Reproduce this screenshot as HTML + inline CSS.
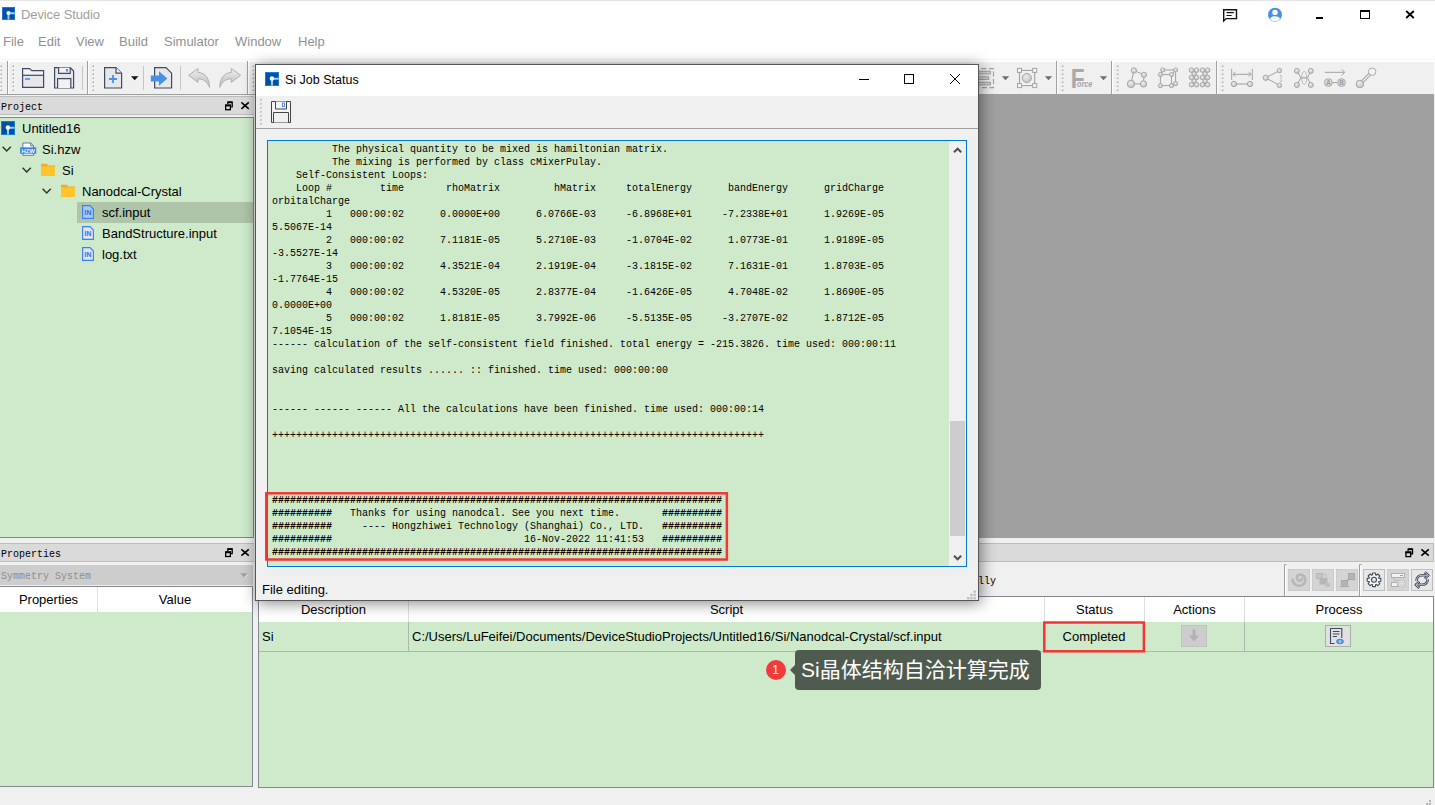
<!DOCTYPE html>
<html><head><meta charset="utf-8"><title>Device Studio</title>
<style>
*{box-sizing:border-box;margin:0;padding:0}
html,body{width:1435px;height:805px;overflow:hidden;background:#fff}
body{position:relative;font-family:"Liberation Sans","Noto Sans CJK SC",sans-serif;font-size:13px;color:#000}
.a{position:absolute}
.t{position:absolute;white-space:pre;line-height:16px;height:16px}
.mono{font-family:"Liberation Mono","Noto Sans CJK SC",monospace}
.sim{position:absolute;white-space:pre;font-family:"Liberation Mono",monospace;font-size:11px;line-height:13px;transform:scaleX(.90909);transform-origin:0 0}
.g{background:#ceeacb}
svg{position:absolute;overflow:visible}
</style></head><body>
<!-- ===== main window chrome ===== -->
<div class="a" style="left:0;top:59px;width:1435px;height:1px;background:#f6f6f6"></div>
<div class="a" id="tb" style="left:0;top:62px;width:1434px;height:33px;background:#f0f0f0"></div>
<div class="a" style="left:0;top:94px;width:1434px;height:1px;background:#a0a0a0"></div>
<div class="a" style="left:0;top:95px;width:1435px;height:710px;background:#f0f0f0"></div>
<div class="t" style="left:21px;top:7px;color:#a0a0a0;letter-spacing:-.1px">Device Studio</div>
<div class="t" style="left:3px;top:34px;color:#919191">File</div>
<div class="t" style="left:38px;top:34px;color:#919191">Edit</div>
<div class="t" style="left:76px;top:34px;color:#919191">View</div>
<div class="t" style="left:119px;top:34px;color:#919191">Build</div>
<div class="t" style="left:164px;top:34px;color:#919191">Simulator</div>
<div class="t" style="left:235px;top:34px;color:#919191">Window</div>
<div class="t" style="left:298px;top:34px;color:#919191">Help</div>
<!-- window controls -->
<div class="a" style="left:0;top:0;width:1435px;height:1px;background:#e4e4e4"></div>
<svg style="left:1222px;top:8px" width="17" height="15" viewBox="0 0 17 15"><path d="M1.7 1.7H14.5V10.6H4.2L1.7 12.9Z" fill="none" stroke="#111" stroke-width="1.4" stroke-linejoin="miter"/><path d="M4.5 4.7H11.8M4.5 7.5H9.6" stroke="#111" stroke-width="1.2"/></svg>
<svg style="left:1267px;top:7px" width="16" height="16" viewBox="0 0 16 16"><circle cx="8" cy="7.8" r="7" fill="#4a90e2"/><circle cx="8" cy="5.4" r="2.7" fill="#fff"/><path d="M2.9 11.9C4 9.9 6 9.3 8 9.3S12 9.9 13.1 11.9C11.9 13.5 10 14.3 8 14.3S4.1 13.5 2.9 11.9Z" fill="#fff"/></svg>
<div class="a" style="left:1316px;top:17px;width:7px;height:2px;background:#000"></div>
<div class="a" style="left:1360px;top:10px;width:10px;height:9px;border:1px solid #000;border-top-width:2px"></div>
<svg style="left:1405px;top:10px" width="10" height="9" viewBox="0 0 10 9"><path d="M1.2 1L8.8 8M8.8 1L1.2 8" stroke="#000" stroke-width="1.8"/></svg>
<!-- logo -->
<svg style="left:2px;top:7px" width="13" height="13" viewBox="0 0 14 14"><rect width="14" height="14" fill="#0050a8"/><rect x=".5" y=".5" width="13" height="13" fill="none" stroke="#1f7ad6" stroke-width="1"/><path d="M7 13.5V6.7H13.5" fill="none" stroke="#9ccdf5" stroke-width="2.1"/><circle cx="6.9" cy="6.5" r="2.2" fill="#fff"/></svg>
<!-- MDI gray area -->
<div class="a" style="left:258px;top:95px;width:1176px;height:443px;background:#a0a0a0"></div>
<svg id="mainicons" style="left:0;top:0" width="1435" height="805" viewBox="0 0 1435 805"><path d="M1.8 65.0V67.0H-0.2Z" fill="#a6a6a6"/><path d="M-0.2 67.0L1.8 65.0" stroke="#cfcfcf" stroke-width=".7"/><path d="M1.8 69.0V71.0H-0.2Z" fill="#a6a6a6"/><path d="M-0.2 71.0L1.8 69.0" stroke="#cfcfcf" stroke-width=".7"/><path d="M1.8 73.0V75.0H-0.2Z" fill="#a6a6a6"/><path d="M-0.2 75.0L1.8 73.0" stroke="#cfcfcf" stroke-width=".7"/><path d="M1.8 77.0V79.0H-0.2Z" fill="#a6a6a6"/><path d="M-0.2 79.0L1.8 77.0" stroke="#cfcfcf" stroke-width=".7"/><path d="M1.8 81.0V83.0H-0.2Z" fill="#a6a6a6"/><path d="M-0.2 83.0L1.8 81.0" stroke="#cfcfcf" stroke-width=".7"/><path d="M1.8 85.0V87.0H-0.2Z" fill="#a6a6a6"/><path d="M-0.2 87.0L1.8 85.0" stroke="#cfcfcf" stroke-width=".7"/><path d="M1.8 89.0V91.0H-0.2Z" fill="#a6a6a6"/><path d="M-0.2 91.0L1.8 89.0" stroke="#cfcfcf" stroke-width=".7"/><path d="M14.0 65.0V67.0H12.0Z" fill="#a6a6a6"/><path d="M12.0 67.0L14.0 65.0" stroke="#cfcfcf" stroke-width=".7"/><path d="M14.0 69.0V71.0H12.0Z" fill="#a6a6a6"/><path d="M12.0 71.0L14.0 69.0" stroke="#cfcfcf" stroke-width=".7"/><path d="M14.0 73.0V75.0H12.0Z" fill="#a6a6a6"/><path d="M12.0 75.0L14.0 73.0" stroke="#cfcfcf" stroke-width=".7"/><path d="M14.0 77.0V79.0H12.0Z" fill="#a6a6a6"/><path d="M12.0 79.0L14.0 77.0" stroke="#cfcfcf" stroke-width=".7"/><path d="M14.0 81.0V83.0H12.0Z" fill="#a6a6a6"/><path d="M12.0 83.0L14.0 81.0" stroke="#cfcfcf" stroke-width=".7"/><path d="M14.0 85.0V87.0H12.0Z" fill="#a6a6a6"/><path d="M12.0 87.0L14.0 85.0" stroke="#cfcfcf" stroke-width=".7"/><path d="M14.0 89.0V91.0H12.0Z" fill="#a6a6a6"/><path d="M12.0 91.0L14.0 89.0" stroke="#cfcfcf" stroke-width=".7"/><path d="M94.0 65.0V67.0H92.0Z" fill="#a6a6a6"/><path d="M92.0 67.0L94.0 65.0" stroke="#cfcfcf" stroke-width=".7"/><path d="M94.0 69.0V71.0H92.0Z" fill="#a6a6a6"/><path d="M92.0 71.0L94.0 69.0" stroke="#cfcfcf" stroke-width=".7"/><path d="M94.0 73.0V75.0H92.0Z" fill="#a6a6a6"/><path d="M92.0 75.0L94.0 73.0" stroke="#cfcfcf" stroke-width=".7"/><path d="M94.0 77.0V79.0H92.0Z" fill="#a6a6a6"/><path d="M92.0 79.0L94.0 77.0" stroke="#cfcfcf" stroke-width=".7"/><path d="M94.0 81.0V83.0H92.0Z" fill="#a6a6a6"/><path d="M92.0 83.0L94.0 81.0" stroke="#cfcfcf" stroke-width=".7"/><path d="M94.0 85.0V87.0H92.0Z" fill="#a6a6a6"/><path d="M92.0 87.0L94.0 85.0" stroke="#cfcfcf" stroke-width=".7"/><path d="M94.0 89.0V91.0H92.0Z" fill="#a6a6a6"/><path d="M92.0 91.0L94.0 89.0" stroke="#cfcfcf" stroke-width=".7"/><path d="M254.0 65.0V67.0H252.0Z" fill="#a6a6a6"/><path d="M252.0 67.0L254.0 65.0" stroke="#cfcfcf" stroke-width=".7"/><path d="M254.0 69.0V71.0H252.0Z" fill="#a6a6a6"/><path d="M252.0 71.0L254.0 69.0" stroke="#cfcfcf" stroke-width=".7"/><path d="M254.0 73.0V75.0H252.0Z" fill="#a6a6a6"/><path d="M252.0 75.0L254.0 73.0" stroke="#cfcfcf" stroke-width=".7"/><path d="M254.0 77.0V79.0H252.0Z" fill="#a6a6a6"/><path d="M252.0 79.0L254.0 77.0" stroke="#cfcfcf" stroke-width=".7"/><path d="M254.0 81.0V83.0H252.0Z" fill="#a6a6a6"/><path d="M252.0 83.0L254.0 81.0" stroke="#cfcfcf" stroke-width=".7"/><path d="M254.0 85.0V87.0H252.0Z" fill="#a6a6a6"/><path d="M252.0 87.0L254.0 85.0" stroke="#cfcfcf" stroke-width=".7"/><path d="M254.0 89.0V91.0H252.0Z" fill="#a6a6a6"/><path d="M252.0 91.0L254.0 89.0" stroke="#cfcfcf" stroke-width=".7"/><path d="M1063.3 65.0V67.0H1061.3Z" fill="#a6a6a6"/><path d="M1061.3 67.0L1063.3 65.0" stroke="#cfcfcf" stroke-width=".7"/><path d="M1063.3 69.0V71.0H1061.3Z" fill="#a6a6a6"/><path d="M1061.3 71.0L1063.3 69.0" stroke="#cfcfcf" stroke-width=".7"/><path d="M1063.3 73.0V75.0H1061.3Z" fill="#a6a6a6"/><path d="M1061.3 75.0L1063.3 73.0" stroke="#cfcfcf" stroke-width=".7"/><path d="M1063.3 77.0V79.0H1061.3Z" fill="#a6a6a6"/><path d="M1061.3 79.0L1063.3 77.0" stroke="#cfcfcf" stroke-width=".7"/><path d="M1063.3 81.0V83.0H1061.3Z" fill="#a6a6a6"/><path d="M1061.3 83.0L1063.3 81.0" stroke="#cfcfcf" stroke-width=".7"/><path d="M1063.3 85.0V87.0H1061.3Z" fill="#a6a6a6"/><path d="M1061.3 87.0L1063.3 85.0" stroke="#cfcfcf" stroke-width=".7"/><path d="M1063.3 89.0V91.0H1061.3Z" fill="#a6a6a6"/><path d="M1061.3 91.0L1063.3 89.0" stroke="#cfcfcf" stroke-width=".7"/><path d="M1118.3 65.0V67.0H1116.3Z" fill="#a6a6a6"/><path d="M1116.3 67.0L1118.3 65.0" stroke="#cfcfcf" stroke-width=".7"/><path d="M1118.3 69.0V71.0H1116.3Z" fill="#a6a6a6"/><path d="M1116.3 71.0L1118.3 69.0" stroke="#cfcfcf" stroke-width=".7"/><path d="M1118.3 73.0V75.0H1116.3Z" fill="#a6a6a6"/><path d="M1116.3 75.0L1118.3 73.0" stroke="#cfcfcf" stroke-width=".7"/><path d="M1118.3 77.0V79.0H1116.3Z" fill="#a6a6a6"/><path d="M1116.3 79.0L1118.3 77.0" stroke="#cfcfcf" stroke-width=".7"/><path d="M1118.3 81.0V83.0H1116.3Z" fill="#a6a6a6"/><path d="M1116.3 83.0L1118.3 81.0" stroke="#cfcfcf" stroke-width=".7"/><path d="M1118.3 85.0V87.0H1116.3Z" fill="#a6a6a6"/><path d="M1116.3 87.0L1118.3 85.0" stroke="#cfcfcf" stroke-width=".7"/><path d="M1118.3 89.0V91.0H1116.3Z" fill="#a6a6a6"/><path d="M1116.3 91.0L1118.3 89.0" stroke="#cfcfcf" stroke-width=".7"/><path d="M1223.3 65.0V67.0H1221.3Z" fill="#a6a6a6"/><path d="M1221.3 67.0L1223.3 65.0" stroke="#cfcfcf" stroke-width=".7"/><path d="M1223.3 69.0V71.0H1221.3Z" fill="#a6a6a6"/><path d="M1221.3 71.0L1223.3 69.0" stroke="#cfcfcf" stroke-width=".7"/><path d="M1223.3 73.0V75.0H1221.3Z" fill="#a6a6a6"/><path d="M1221.3 75.0L1223.3 73.0" stroke="#cfcfcf" stroke-width=".7"/><path d="M1223.3 77.0V79.0H1221.3Z" fill="#a6a6a6"/><path d="M1221.3 79.0L1223.3 77.0" stroke="#cfcfcf" stroke-width=".7"/><path d="M1223.3 81.0V83.0H1221.3Z" fill="#a6a6a6"/><path d="M1221.3 83.0L1223.3 81.0" stroke="#cfcfcf" stroke-width=".7"/><path d="M1223.3 85.0V87.0H1221.3Z" fill="#a6a6a6"/><path d="M1221.3 87.0L1223.3 85.0" stroke="#cfcfcf" stroke-width=".7"/><path d="M1223.3 89.0V91.0H1221.3Z" fill="#a6a6a6"/><path d="M1221.3 91.0L1223.3 89.0" stroke="#cfcfcf" stroke-width=".7"/><defs><radialGradient id="rg" cx=".4" cy=".35" r=".75"><stop offset="0" stop-color="#ececec"/><stop offset="1" stop-color="#bdbdbd"/></radialGradient><linearGradient id="lg" x1="0" y1="0" x2="0" y2="1"><stop offset="0" stop-color="#ededed"/><stop offset="1" stop-color="#bcbcbc"/></linearGradient></defs><path d="M7.5 61V94" stroke="#a0a0a0" stroke-width="1"/><path d="M8.5 61V94" stroke="#fff" stroke-width="1"/><path d="M87.5 61V94" stroke="#a0a0a0" stroke-width="1"/><path d="M88.5 61V94" stroke="#fff" stroke-width="1"/><path d="M247.5 61V94" stroke="#a0a0a0" stroke-width="1"/><path d="M248.5 61V94" stroke="#fff" stroke-width="1"/><path d="M82.5 66V90" stroke="#c5c5c5" stroke-width="1"/><path d="M143.5 66V90" stroke="#c5c5c5" stroke-width="1"/><path d="M180.5 66V90" stroke="#c5c5c5" stroke-width="1"/><path d="M22.6 68.6H29.6L31.8 70.7H43.6V87.4H22.6Z" fill="#f3f3f5"/><path d="M22.6 75.3H43.6V87.4H22.6Z" fill="#e6e7eb"/><path d="M22.6 68.6H29.6L31.8 70.7H43.6V87.4H22.6Z" fill="none" stroke="#3f4a5e" stroke-width="1.2" stroke-linejoin="miter"/><path d="M22.6 75.3H43.6" stroke="#3f4a5e" stroke-width="1.2"/><path d="M25 79H30" stroke="#4a90e2" stroke-width="1.6"/><path d="M54.6 67.6H70.2L73.6 71V88H54.6Z" fill="#e6e7eb" stroke="#3f4a5e" stroke-width="1.2"/><path d="M58.6 67.6V73.3H70.2V67.6" fill="#f2f2f4" stroke="#3f4a5e" stroke-width="1.2"/><rect x="66" y="69" width="2" height="2.6" fill="#4a90e2"/><path d="M57.6 88V78.6H70.8V88" fill="#f2f2f4" stroke="#3f4a5e" stroke-width="1.2"/><path d="M104.6 67.6H116L121.6 73.2V88H104.6Z" fill="#e6e7eb" stroke="#3f4a5e" stroke-width="1.2"/><path d="M116 67.6V73.2H121.6" fill="#f4f4f6" stroke="#3f4a5e" stroke-width="1.2"/><path d="M109 79H117M113 75V83" stroke="#4a90e2" stroke-width="1.8"/><path d="M131 76.2H138.4L134.7 80.3Z" fill="#111"/><path d="M154.6 67.6H166L171.6 73.2V88H154.6Z" fill="#e6e7eb" stroke="#3f4a5e" stroke-width="1.2"/><path d="M150.8 75.4H159V71.2L167.4 78.5L159 85.8V81.6H150.8Z" fill="#4a90e2"/><path d="M188.6 75.3L198 68.4V72.4C205.5 72.8 209.6 79 209.5 87.4C207.4 81.6 203.4 79 198 78.8V82.4Z" fill="url(#lg)" stroke="#b0b0b0" stroke-width="1"/><g transform="translate(429.3 0) scale(-1 1)"><path d="M188.6 75.3L198 68.4V72.4C205.5 72.8 209.6 79 209.5 87.4C207.4 81.6 203.4 79 198 78.8V82.4Z" fill="url(#lg)" stroke="#b0b0b0" stroke-width="1"/></g><rect x="966.5" y="68.6" width="27" height="19" fill="none" stroke="#a2a2a2" stroke-width="1.1" stroke-dasharray="5 2.5"/><rect x="970" y="71.3" width="20.4" height="2.6" fill="#d4d4d4" stroke="#a2a2a2" stroke-width="1"/><rect x="970" y="76.8" width="18.7" height="2.6" fill="#d4d4d4" stroke="#a2a2a2" stroke-width="1"/><rect x="970" y="82.3" width="20.4" height="2.6" fill="#d4d4d4" stroke="#a2a2a2" stroke-width="1"/><path d="M1001.8 76.2H1009.2L1005.5 80.3Z" fill="#6f6f6f"/><rect x="1019.5" y="70.4" width="15.2" height="15.2" fill="none" stroke="#a2a2a2" stroke-width="1.1"/><circle cx="1026.8" cy="78" r="4.6" fill="url(#rg)" stroke="#a2a2a2" stroke-width=".9"/><rect x="1017.5" y="68.4" width="4" height="4" fill="#f6f6f6" stroke="#a2a2a2" stroke-width="1"/><rect x="1032.7" y="68.4" width="4" height="4" fill="#f6f6f6" stroke="#a2a2a2" stroke-width="1"/><rect x="1017.5" y="83.6" width="4" height="4" fill="#f6f6f6" stroke="#a2a2a2" stroke-width="1"/><rect x="1032.7" y="83.6" width="4" height="4" fill="#f6f6f6" stroke="#a2a2a2" stroke-width="1"/><path d="M1044.8 76.2H1052.2L1048.5 80.3Z" fill="#6f6f6f"/><path d="M1056.5 61V94" stroke="#a0a0a0" stroke-width="1"/><path d="M1057.5 61V94" stroke="#fff" stroke-width="1"/><text x="1070.7" y="87.8" font-family="Liberation Sans,sans-serif" font-weight="bold" font-size="28.2" fill="#a9a9a9" textLength="13.8" lengthAdjust="spacingAndGlyphs">F</text><text x="1077" y="86.9" font-family="Liberation Sans,sans-serif" font-style="italic" font-weight="bold" font-size="9" fill="#a4a4a4" textLength="15.2" lengthAdjust="spacingAndGlyphs">orce</text><path d="M1099.8 76.2H1107.2L1103.5 80.3Z" fill="#6f6f6f"/><path d="M1111.5 61V94" stroke="#a0a0a0" stroke-width="1"/><path d="M1112.5 61V94" stroke="#fff" stroke-width="1"/><path d="M1133.9 70.5L1144 74.8L1143.5 83.9L1131 83.9Z" fill="none" stroke="#a2a2a2" stroke-width="1"/><circle cx="1133.9" cy="70.5" r="2.7" fill="url(#rg)" stroke="#a2a2a2" stroke-width=".9"/><circle cx="1144" cy="74.8" r="2.6" fill="url(#rg)" stroke="#a2a2a2" stroke-width=".9"/><circle cx="1131" cy="83.9" r="3.7" fill="url(#rg)" stroke="#a2a2a2" stroke-width=".9"/><circle cx="1143.5" cy="83.9" r="3.2" fill="url(#rg)" stroke="#a2a2a2" stroke-width=".9"/><path d="M1160.4 74.6H1171.5V85.6H1160.4ZM1162.7 70H1175.6V83.6M1160.4 74.6L1162.7 70M1171.5 74.6L1175.6 70M1171.5 85.6L1175.6 83.6" fill="none" stroke="#a2a2a2" stroke-width="1"/><circle cx="1160.4" cy="74.6" r="2.1" fill="url(#rg)" stroke="#a2a2a2" stroke-width=".9"/><circle cx="1171.5" cy="74.6" r="2.1" fill="url(#rg)" stroke="#a2a2a2" stroke-width=".9"/><circle cx="1160.4" cy="85.6" r="2.1" fill="url(#rg)" stroke="#a2a2a2" stroke-width=".9"/><circle cx="1171.5" cy="85.6" r="2.1" fill="url(#rg)" stroke="#a2a2a2" stroke-width=".9"/><circle cx="1162.7" cy="70" r="2.1" fill="url(#rg)" stroke="#a2a2a2" stroke-width=".9"/><circle cx="1175.6" cy="70" r="2.1" fill="url(#rg)" stroke="#a2a2a2" stroke-width=".9"/><circle cx="1175.6" cy="83.6" r="2.1" fill="url(#rg)" stroke="#a2a2a2" stroke-width=".9"/><circle cx="1191.5" cy="70.2" r="2.3" fill="url(#rg)" stroke="#a2a2a2" stroke-width=".9"/><circle cx="1196.6" cy="70.2" r="2.3" fill="url(#rg)" stroke="#a2a2a2" stroke-width=".9"/><circle cx="1202.5" cy="70.2" r="2.3" fill="url(#rg)" stroke="#a2a2a2" stroke-width=".9"/><circle cx="1207.6" cy="70.2" r="2.3" fill="url(#rg)" stroke="#a2a2a2" stroke-width=".9"/><circle cx="1191.5" cy="77.5" r="2.3" fill="url(#rg)" stroke="#a2a2a2" stroke-width=".9"/><circle cx="1196.6" cy="77.5" r="2.3" fill="url(#rg)" stroke="#a2a2a2" stroke-width=".9"/><circle cx="1202.5" cy="77.5" r="2.3" fill="url(#rg)" stroke="#a2a2a2" stroke-width=".9"/><circle cx="1207.6" cy="77.5" r="2.3" fill="url(#rg)" stroke="#a2a2a2" stroke-width=".9"/><circle cx="1191.5" cy="84.7" r="2.3" fill="url(#rg)" stroke="#a2a2a2" stroke-width=".9"/><circle cx="1196.6" cy="84.7" r="2.3" fill="url(#rg)" stroke="#a2a2a2" stroke-width=".9"/><circle cx="1202.5" cy="84.7" r="2.3" fill="url(#rg)" stroke="#a2a2a2" stroke-width=".9"/><circle cx="1207.6" cy="84.7" r="2.3" fill="url(#rg)" stroke="#a2a2a2" stroke-width=".9"/><circle cx="1194.1" cy="73.9" r="2.2" fill="url(#rg)" stroke="#a2a2a2" stroke-width=".9"/><circle cx="1205.1" cy="73.9" r="2.2" fill="url(#rg)" stroke="#a2a2a2" stroke-width=".9"/><circle cx="1194.1" cy="81.1" r="2.2" fill="url(#rg)" stroke="#a2a2a2" stroke-width=".9"/><circle cx="1205.1" cy="81.1" r="2.2" fill="url(#rg)" stroke="#a2a2a2" stroke-width=".9"/><path d="M1216.5 61V94" stroke="#a0a0a0" stroke-width="1"/><path d="M1217.5 61V94" stroke="#fff" stroke-width="1"/><path d="M1231.7 68.9V80M1252.3 68.9V80M1233 74.3H1251M1235.5 71.8L1233 74.3L1235.5 76.8M1248.5 71.8L1251 74.3L1248.5 76.8" fill="none" stroke="#a2a2a2" stroke-width="1"/><path d="M1234 84H1250" stroke="#c6c6c6" stroke-width="2"/><circle cx="1233.9" cy="84" r="2.7" fill="url(#rg)" stroke="#a2a2a2" stroke-width=".9"/><circle cx="1250" cy="84" r="2.7" fill="url(#rg)" stroke="#a2a2a2" stroke-width=".9"/><path d="M1279.4 70.6L1265.7 77.8L1279.4 85.4" fill="none" stroke="#a2a2a2" stroke-width="1"/><path d="M1281 75V82M1279.8 76.4L1281 75L1282.2 76.4M1279.8 80.6L1281 82L1282.2 80.6" fill="none" stroke="#c0c0c0" stroke-width=".9"/><circle cx="1265.7" cy="77.8" r="2.6" fill="url(#rg)" stroke="#a2a2a2" stroke-width=".9"/><circle cx="1279.4" cy="70.6" r="2.2" fill="url(#rg)" stroke="#a2a2a2" stroke-width=".9"/><circle cx="1279.4" cy="85.4" r="2.2" fill="url(#rg)" stroke="#a2a2a2" stroke-width=".9"/><path d="M1296.9 70.9L1300.8 77.8L1296.9 85M1310.8 70.9L1307.5 77.8L1310.8 85" fill="none" stroke="#a2a2a2" stroke-width="1"/><path d="M1300.8 77.8H1307.5" stroke="#bdbdbd" stroke-width="2"/><ellipse cx="1304.2" cy="77.8" rx="2.6" ry="6.4" fill="none" stroke="#b4b4b4" stroke-width=".9"/><circle cx="1296.9" cy="70.9" r="2.5" fill="url(#rg)" stroke="#a2a2a2" stroke-width=".9"/><circle cx="1310.8" cy="70.9" r="2.5" fill="url(#rg)" stroke="#a2a2a2" stroke-width=".9"/><circle cx="1296.9" cy="85" r="2.5" fill="url(#rg)" stroke="#a2a2a2" stroke-width=".9"/><circle cx="1310.8" cy="85" r="2.5" fill="url(#rg)" stroke="#a2a2a2" stroke-width=".9"/><path d="M1325 72.3H1344.8M1341.6 69.3L1344.8 72.3L1341.6 75.3" fill="none" stroke="#a2a2a2" stroke-width="1"/><path d="M1332 82.6H1338" fill="none" stroke="#a2a2a2" stroke-width="1"/><circle cx="1328.3" cy="82.6" r="3.9" fill="#dcdcdc" stroke="#a2a2a2" stroke-width=".9"/><circle cx="1341.5" cy="82.6" r="3.9" fill="#dcdcdc" stroke="#a2a2a2" stroke-width=".9"/><text x="1328.3" y="84.9" font-family="Liberation Sans,sans-serif" font-size="6.5" font-weight="bold" fill="#9a9a9a" text-anchor="middle">A</text><text x="1341.5" y="84.9" font-family="Liberation Sans,sans-serif" font-size="6.5" font-weight="bold" fill="#9a9a9a" text-anchor="middle">B</text><path d="M1360 84L1372.2 71.7" stroke="#a2a2a2" stroke-width="3.2"/><path d="M1360 84L1372.2 71.7" stroke="#f0f0f0" stroke-width="1.3"/><circle cx="1359.9" cy="84" r="3.8" fill="url(#rg)" stroke="#a2a2a2" stroke-width=".9"/><circle cx="1372.2" cy="71.7" r="3.7" fill="#f4f4f4" stroke="#a2a2a2" stroke-width=".9"/></svg>

<!-- ===== project panel ===== -->
<div class="a" style="left:0;top:96px;width:254px;height:19px;background:#dadada;border-top:1px solid #bdbdbd;border-bottom:1px solid #bdbdbd"></div>
<div class="sim" style="left:1px;top:101px">Project</div>
<div class="a g" style="left:0;top:117px;width:254px;height:421px;border:1px solid #828790;border-left:0"></div>
<div class="a" style="left:77px;top:202px;width:176px;height:21px;background:#aec5aa"></div>
<div class="t" style="left:22px;top:121px">Untitled16</div>
<div class="t" style="left:42px;top:142px">Si.hzw</div>
<div class="t" style="left:62px;top:163px">Si</div>
<div class="t" style="left:82px;top:184px">Nanodcal-Crystal</div>
<div class="t" style="left:102px;top:205px">scf.input</div>
<div class="t" style="left:102px;top:226px">BandStructure.input</div>
<div class="t" style="left:102px;top:247px">log.txt</div>
<svg id="treeicons" style="left:0;top:0" width="260" height="805" viewBox="0 0 260 805"><g transform="translate(1 121)"><rect width="14" height="14" fill="#0050a8"/><rect x=".5" y=".5" width="13" height="13" fill="none" stroke="#1f7ad6" stroke-width="1"/><path d="M7 13.5V6.7H13.5" fill="none" stroke="#9ccdf5" stroke-width="2.1"/><circle cx="6.9" cy="6.5" r="2.2" fill="#fff"/></g><path d="M2.6 146.8L6.7 151.0L10.8 146.8" fill="none" stroke="#333" stroke-width="1.5"/><path d="M22.6 167.8L26.7 172.0L30.8 167.8" fill="none" stroke="#333" stroke-width="1.5"/><path d="M42.6 188.8L46.7 193.0L50.8 188.8" fill="none" stroke="#333" stroke-width="1.5"/><path d="M22.9 143H30.7L33.6 145.9V155.3H22.9Z" fill="#fff" stroke="#5a6b8c" stroke-width=".9"/><path d="M30.7 143V145.9H33.6" fill="none" stroke="#5a6b8c" stroke-width=".9"/><rect x="20.2" y="147.4" width="16" height="6.3" fill="#2f7bea"/><text x="28.2" y="152.9" font-family="Liberation Sans,sans-serif" font-weight="bold" font-size="6.2" fill="#fff" text-anchor="middle" textLength="13.6" lengthAdjust="spacingAndGlyphs">HZW</text><path d="M41 163.8H46.6L48.4 165.6H55V175.8H41Z" fill="#f7a928"/><path d="M41 166.4H55V175.8H41Z" fill="#ffc42e"/><path d="M61 184.8H66.6L68.4 186.6H75V196.8H61Z" fill="#f7a928"/><path d="M61 187.4H75V196.8H61Z" fill="#ffc42e"/><path d="M82.6 205.6H90L93.4 209V218.4H82.6Z" fill="#a9c9f7" stroke="#3b7ff0" stroke-width="1.1"/><text x="88" y="215.2" font-family="Liberation Sans,sans-serif" font-weight="bold" font-size="6.8" fill="#2f70e6" text-anchor="middle">IN</text><path d="M82.6 226.6H90L93.4 230V239.4H82.6Z" fill="#dbe5fa" stroke="#3b7ff0" stroke-width="1.1"/><text x="88" y="236.2" font-family="Liberation Sans,sans-serif" font-weight="bold" font-size="6.8" fill="#2f70e6" text-anchor="middle">IN</text><path d="M82.6 247.6H90L93.4 251V260.4H82.6Z" fill="#dbe5fa" stroke="#3b7ff0" stroke-width="1.1"/><text x="88" y="257.2" font-family="Liberation Sans,sans-serif" font-weight="bold" font-size="6.8" fill="#2f70e6" text-anchor="middle">IN</text></svg>
<!-- ===== properties panel ===== -->
<div class="a" style="left:0;top:543px;width:254px;height:19px;background:#dadada;border-top:1px solid #bdbdbd;border-bottom:1px solid #bdbdbd"></div>
<div class="sim" style="left:1px;top:548px">Properties</div>
<div class="a" style="left:0;top:565px;width:253px;height:20px;background:#cdcdcd"></div>
<div class="sim" style="left:1px;top:570px;color:#8e8e8e">Symmetry System</div>
<div class="a g" style="left:0;top:586px;width:253px;height:201px;border:1px solid #828790;border-left:0"></div>
<div class="a" style="left:0;top:587px;width:252px;height:25px;background:#fff"></div>
<div class="a" style="left:97px;top:587px;width:1px;height:25px;background:#dedede"></div>
<div class="t" style="left:0;top:592px;width:97px;text-align:center">Properties</div>
<div class="t" style="left:98px;top:592px;width:154px;text-align:center">Value</div>
<!-- ===== job panel ===== -->
<div class="a" style="left:258px;top:543px;width:1176px;height:19px;background:#dadada;border:1px solid #bcbcbc;border-left:0"></div>
<div class="sim" style="left:846px;top:575px">Job finished successfully</div>
<div class="a" style="left:1288px;top:569px;width:22px;height:22px;background:#d4d4d4;border:1px solid #cbcbcb"></div>
<div class="a" style="left:1312px;top:569px;width:22px;height:22px;background:#d4d4d4;border:1px solid #cbcbcb"></div>
<div class="a" style="left:1336px;top:569px;width:22px;height:22px;background:#d4d4d4;border:1px solid #cbcbcb"></div>
<div class="a" style="left:1363px;top:569px;width:22px;height:22px;background:#e7e7e7;border:1px solid #bdbdbd"></div>
<div class="a" style="left:1387px;top:569px;width:22px;height:22px;background:#d4d4d4;border:1px solid #cbcbcb"></div>
<div class="a" style="left:1411px;top:569px;width:22px;height:22px;background:#e7e7e7;border:1px solid #bdbdbd"></div>
<div class="a g" style="left:258px;top:596px;width:1176px;height:192px;border:1px solid #828790"></div>
<div class="a" style="left:259px;top:597px;width:1174px;height:25px;background:#fff"></div>
<div class="a" style="left:408px;top:597px;width:1px;height:25px;background:#dedede"></div>
<div class="a" style="left:408px;top:622px;width:1px;height:29px;background:#a9b9ab"></div>
<div class="a" style="left:1044px;top:597px;width:1px;height:25px;background:#dedede"></div>
<div class="a" style="left:1044px;top:622px;width:1px;height:29px;background:#a9b9ab"></div>
<div class="a" style="left:1144px;top:597px;width:1px;height:25px;background:#dedede"></div>
<div class="a" style="left:1144px;top:622px;width:1px;height:29px;background:#a9b9ab"></div>
<div class="a" style="left:1244px;top:597px;width:1px;height:25px;background:#dedede"></div>
<div class="a" style="left:1244px;top:622px;width:1px;height:29px;background:#a9b9ab"></div>
<div class="a" style="left:259px;top:651px;width:1174px;height:1px;background:#a9b9ab"></div>
<div class="t" style="left:259px;top:602px;width:149px;text-align:center">Description</div>
<div class="t" style="left:409px;top:602px;width:635px;text-align:center">Script</div>
<div class="t" style="left:1045px;top:602px;width:99px;text-align:center">Status</div>
<div class="t" style="left:1145px;top:602px;width:99px;text-align:center">Actions</div>
<div class="t" style="left:1245px;top:602px;width:188px;text-align:center">Process</div>
<div class="t" style="left:262px;top:629px">Si</div>
<div class="t" style="left:412px;top:629px">C:/Users/LuFeifei/Documents/DeviceStudioProjects/Untitled16/Si/Nanodcal-Crystal/scf.input</div>
<div class="t" style="left:1044px;top:629px;width:100px;text-align:center">Completed</div>
<div class="a" style="left:1181px;top:625px;width:26px;height:22px;background:#cdcdcd;border:1px solid #c2c2c2"></div>
<div class="a" style="left:1325px;top:625px;width:26px;height:22px;background:#e1e1e1;border:1px solid #adadad"></div>
<svg id="jobicons" style="left:0;top:0" width="1435" height="805" viewBox="0 0 1435 805"><path d="M1286.5 564.5H1284.5V596" fill="none" stroke="#a0a0a0" stroke-width="1"/><path d="M1285.5 565.5V596" stroke="#fff" stroke-width="1"/><path d="M1361.5 564.5H1359.5V596" fill="none" stroke="#a0a0a0" stroke-width="1"/><path d="M1360.5 565.5V596" stroke="#fff" stroke-width="1"/><path d="M1192.5 629.5H1195.5V635.5H1199L1194 641.5L1189 635.5H1192.5Z" fill="#b2b2b2"/><path d="M1341.8 638V628.5H1330.5V643.5H1334.5" fill="none" stroke="#3f4a5e" stroke-width="1.1"/><path d="M1332.8 631.5H1339.5M1332.8 634H1339.5M1332.8 636.5H1337" stroke="#3f4a5e" stroke-width="1"/><ellipse cx="1340" cy="641.5" rx="3.8" ry="2.7" fill="#4a90e2"/><circle cx="1340" cy="641.5" r="1.3" fill="#e1e1e1"/><circle cx="1340" cy="641.5" r=".6" fill="#4a90e2"/><path d="M1372.6 573.0L1375.4 573.0L1375.7 575.0L1376.2 575.2L1377.8 574.0L1379.8 576.0L1378.6 577.6L1378.8 578.1L1380.8 578.4L1380.8 581.2L1378.8 581.5L1378.6 582.0L1379.8 583.6L1377.8 585.6L1376.2 584.4L1375.7 584.6L1375.4 586.6L1372.6 586.6L1372.3 584.6L1371.8 584.4L1370.2 585.6L1368.2 583.6L1369.4 582.0L1369.2 581.5L1367.2 581.2L1367.2 578.4L1369.2 578.1L1369.4 577.6L1368.2 576.0L1370.2 574.0L1371.8 575.2L1372.3 575.0Z" fill="#f4f4f4" stroke="#3f4a5e" stroke-width="1.1" stroke-linejoin="round"/><circle cx="1374" cy="579.8" r="2.5" fill="#e7e7e7" stroke="#3f4a5e" stroke-width="1.1"/><g fill="none" stroke-linejoin="round"><path d="M1416.6 581C1416.4 577 1419 575.3 1422 575.3H1427.5M1424.8 572.2L1428.4 575.4L1424.8 578.6" stroke="#3f4a5e" stroke-width="2.6"/><path d="M1427.6 579.2C1427.8 583 1425 584.8 1422 584.8H1416.7M1419.4 581.6L1415.8 584.8L1419.4 588" stroke="#3f4a5e" stroke-width="2.6"/><path d="M1416.6 581C1416.4 577 1419 575.3 1422 575.3H1427.5M1424.8 572.2L1428.4 575.4L1424.8 578.6" stroke="#e7e7e7" stroke-width=".8"/><path d="M1427.6 579.2C1427.8 583 1425 584.8 1422 584.8H1416.7M1419.4 581.6L1415.8 584.8L1419.4 588" stroke="#e7e7e7" stroke-width=".8"/></g><rect x="1391.5" y="573.5" width="13" height="4" fill="#f2f2f2" stroke="#b0b0b0" stroke-width="1"/><path d="M1400 575.5H1403" stroke="#a0a0a0" stroke-width="1"/><rect x="1391.5" y="582.5" width="6" height="4" fill="#f2f2f2" stroke="#b0b0b0" stroke-width="1"/><path d="M1394 578V580.5H1399" fill="none" stroke="#b0b0b0" stroke-width="1" stroke-dasharray="1.5 1"/><circle cx="1401.5" cy="583.5" r="3.8" fill="#e6e6e6" stroke="#bcbcbc" stroke-width="1"/><circle cx="1401.5" cy="583.5" r="1.8" fill="none" stroke="#c4c4c4" stroke-width=".9"/><path d="M1292.5 579.5C1293 585 1298.5 587.5 1303 584.5C1307 581.5 1305.5 575.5 1301 574.5C1297.5 574 1295.8 577.5 1297.8 579.8C1299.5 581.5 1302 580.5 1301.8 578.5" fill="none" stroke="#b4b4b4" stroke-width="2.6" stroke-linecap="round" opacity=".9"/><rect x="1316.5" y="573.5" width="6" height="5" fill="#c4c4c4" stroke="#b8b8b8" stroke-width="1"/><rect x="1319.5" y="578" width="8" height="6.5" fill="#b6b6b6"/><path d="M1321 578V576C1321 573.5 1326 573.5 1326 576V578" fill="none" stroke="#c2c2c2" stroke-width="1.2"/><rect x="1325.5" y="583" width="4.5" height="4" fill="#c0c0c0"/><rect x="1348.5" y="573.5" width="6" height="4.5" fill="#b4b4b4" stroke="#a8a8a8" stroke-width="1"/><path d="M1347.5 579.5H1355.5" stroke="#a8a8a8" stroke-width="1.2"/><rect x="1341.5" y="580.5" width="6" height="4.5" fill="#b4b4b4" stroke="#a8a8a8" stroke-width="1"/><path d="M1340 586.5H1349" stroke="#a8a8a8" stroke-width="1.2"/><path d="M1347.5 580.5L1349.5 578.5" stroke="#a8a8a8" stroke-width="1.2"/></svg>
<svg id="dockicons" style="left:0;top:0" width="1435" height="805" viewBox="0 0 1435 805"><path d="M227.8 104.3V102.2H232.2V106.9H230.6" fill="none" stroke="#000" stroke-width="1.3"/><path d="M227.8 102.3H232.2" stroke="#000" stroke-width="1.8"/><rect x="225.65" y="105.2" width="4.7" height="4.5" fill="none" stroke="#000" stroke-width="1.3"/><path d="M225 105.5H231" stroke="#000" stroke-width="1.9"/><path d="M241.4 102.4L248.8 108.8M248.8 102.4L241.4 108.8" stroke="#000" stroke-width="1.6"/><path d="M227.8 551.1V549.0H232.2V553.7H230.6" fill="none" stroke="#000" stroke-width="1.3"/><path d="M227.8 549.1H232.2" stroke="#000" stroke-width="1.8"/><rect x="225.65" y="552.0" width="4.7" height="4.5" fill="none" stroke="#000" stroke-width="1.3"/><path d="M225 552.3H231" stroke="#000" stroke-width="1.9"/><path d="M241.4 549.3L248.8 555.7M248.8 549.3L241.4 555.7" stroke="#000" stroke-width="1.6"/><path d="M1408.1 551.2V549.1H1412.5V553.8H1410.9" fill="none" stroke="#000" stroke-width="1.3"/><path d="M1408.1 549.2H1412.5" stroke="#000" stroke-width="1.8"/><rect x="1405.95" y="552.1" width="4.7" height="4.5" fill="none" stroke="#000" stroke-width="1.3"/><path d="M1405.3 552.4H1411.3" stroke="#000" stroke-width="1.9"/><path d="M1421.4 549.3L1428.8 555.7M1428.8 549.3L1421.4 555.7" stroke="#000" stroke-width="1.6"/><path d="M240.2 573.2H248.2L244.2 577.7Z" fill="#a2a2a2"/><path d="M244.6 577.3L248 573.5" stroke="#f4f4f4" stroke-width="1"/></svg>
<svg style="left:0;top:0" width="1435" height="805" viewBox="0 0 1435 805"><rect x="1044.3" y="622.5" width="99.6" height="28.8" fill="none" stroke="#f73434" stroke-width="2.5"/></svg>
<div class="a" style="left:1429px;top:800px;width:2px;height:2px;background:#b4b4b4"></div><div class="a" style="left:1426px;top:803px;width:2px;height:2px;background:#b4b4b4"></div><div class="a" style="left:1429px;top:803px;width:2px;height:2px;background:#b4b4b4"></div>
<!-- tooltip -->
<div class="a" style="left:795px;top:650px;width:246px;height:40px;background:#4f5b4f;border-radius:4px"></div>
<div class="a" style="left:790px;top:665px;width:0;height:0;border:5px solid transparent;border-right:5px solid #4f5b4f;border-left:0"></div>
<div class="t" style="left:801px;top:655px;font-size:21px;line-height:30px;height:30px;color:#fff">Si晶体结构自洽计算完成</div>
<div class="a" style="left:765.5px;top:660px;width:20px;height:20px;border-radius:10px;background:#f33a3a;color:#fff;font-size:12px;line-height:20px;text-align:center">1</div>
<!-- ===== dialog ===== -->
<div class="a" id="dlg" style="left:255px;top:64px;width:724px;height:537px;background:#f0f0f0;border:1px solid #565656;box-shadow:1.5px 2px 14px rgba(0,0,0,.48)"></div>
<div class="a" style="left:256px;top:65px;width:722px;height:31px;background:#fff"></div>
<div class="t" style="left:285px;top:72px;font-size:12.5px">Si Job Status</div>
<div class="a" style="left:256px;top:128px;width:722px;height:1px;background:#a0a0a0"></div>
<div class="a g" style="left:267px;top:140px;width:700px;height:427px;border:1px solid #0078d7"></div>
<div class="a" style="left:949px;top:141px;width:17px;height:425px;background:#f0f0f0"></div>
<div class="a" style="left:950px;top:421px;width:15px;height:115px;background:#cdcdcd"></div>
<div class="t" style="left:262px;top:582px">File editing.</div>
<div class="sim" id="log" style="left:272px;top:143px">          The physical quantity to be mixed is hamiltonian matrix.
          The mixing is performed by class cMixerPulay.
    Self-Consistent Loops:
    Loop #        time       rhoMatrix         hMatrix     totalEnergy      bandEnergy      gridCharge
orbitalCharge
         1   000:00:02      0.0000E+00      6.0766E-03     -6.8968E+01     -7.2338E+01      1.9269E-05
5.5067E-14
         2   000:00:02      7.1181E-05      5.2710E-03     -1.0704E-02      1.0773E-01      1.9189E-05
-3.5527E-14
         3   000:00:02      4.3521E-04      2.1919E-04     -3.1815E-02      7.1631E-01      1.8703E-05
-1.7764E-15
         4   000:00:02      4.5320E-05      2.8377E-04     -1.6426E-05      4.7048E-02      1.8690E-05
0.0000E+00
         5   000:00:02      1.8181E-05      3.7992E-06     -5.5135E-05     -3.2707E-02      1.8712E-05
7.1054E-15
------ calculation of the self-consistent field finished. total energy = -215.3826. time used: 000:00:11

saving calculated results ...... :: finished. time used: 000:00:00


------ ------ ------ All the calculations have been finished. time used: 000:00:14

++++++++++++++++++++++++++++++++++++++++++++++++++++++++++++++++++++++++++++++++++




<b>###########################################################################</b>
<b>##########</b>   Thanks for using nanodcal. See you next time.       <b>##########</b>
<b>##########</b>     ---- Hongzhiwei Technology (Shanghai) Co., LTD.   <b>##########</b>
<b>##########</b>                                16-Nov-2022 11:41:53   <b>##########</b>
<b>###########################################################################</b></div>

<svg id="dlgicons" style="left:0;top:0" width="1435" height="805" viewBox="0 0 1435 805"><path d="M261.6 98.6V100.6H259.6Z" fill="#a6a6a6"/><path d="M259.6 100.6L261.6 98.6" stroke="#cfcfcf" stroke-width=".7"/><path d="M261.6 102.6V104.6H259.6Z" fill="#a6a6a6"/><path d="M259.6 104.6L261.6 102.6" stroke="#cfcfcf" stroke-width=".7"/><path d="M261.6 106.6V108.6H259.6Z" fill="#a6a6a6"/><path d="M259.6 108.6L261.6 106.6" stroke="#cfcfcf" stroke-width=".7"/><path d="M261.6 110.6V112.6H259.6Z" fill="#a6a6a6"/><path d="M259.6 112.6L261.6 110.6" stroke="#cfcfcf" stroke-width=".7"/><path d="M261.6 114.6V116.6H259.6Z" fill="#a6a6a6"/><path d="M259.6 116.6L261.6 114.6" stroke="#cfcfcf" stroke-width=".7"/><path d="M261.6 118.6V120.6H259.6Z" fill="#a6a6a6"/><path d="M259.6 120.6L261.6 118.6" stroke="#cfcfcf" stroke-width=".7"/><path d="M261.6 122.6V124.6H259.6Z" fill="#a6a6a6"/><path d="M259.6 124.6L261.6 122.6" stroke="#cfcfcf" stroke-width=".7"/><g transform="translate(265 72)"><rect width="14" height="14" fill="#0050a8"/><rect x=".5" y=".5" width="13" height="13" fill="none" stroke="#1f7ad6" stroke-width="1"/><path d="M7 13.5V6.7H13.5" fill="none" stroke="#9ccdf5" stroke-width="2.1"/><circle cx="6.9" cy="6.5" r="2.2" fill="#fff"/></g><path d="M859 79.5H869" stroke="#000" stroke-width="1"/><rect x="904.5" y="74.5" width="9" height="9" fill="none" stroke="#000" stroke-width="1"/><path d="M950 74L960 84M960 74L950 84" stroke="#000" stroke-width="1"/><path d="M271.5 101.5H290.5V122.5H271.5Z" fill="#f4f4f4" stroke="#444" stroke-width="1"/><path d="M275.5 101.5V109H286.5V101.5" fill="#f4f4f4" stroke="#444" stroke-width="1"/><rect x="282.5" y="103" width="2" height="3.6" fill="none" stroke="#2f7bea" stroke-width=".8"/><path d="M273.5 122.5V112.5H288.5V122.5" fill="#f0f0f0" stroke="#444" stroke-width="1"/><path d="M954 152.3L957.6 148.7L961.2 152.3" fill="none" stroke="#505050" stroke-width="2"/><path d="M954 555.7L957.6 559.3L961.2 555.7" fill="none" stroke="#505050" stroke-width="2"/><rect x="973.5" y="590.5" width="2.3" height="2.3" fill="#b9b9b9"/><rect x="970.3" y="593.8" width="2.3" height="2.3" fill="#b9b9b9"/><rect x="973.5" y="593.8" width="2.3" height="2.3" fill="#b9b9b9"/><rect x="967.1" y="597.1" width="2.3" height="2.3" fill="#b9b9b9"/><rect x="970.3" y="597.1" width="2.3" height="2.3" fill="#b9b9b9"/><rect x="973.5" y="597.1" width="2.3" height="2.3" fill="#b9b9b9"/><rect x="266.3" y="493.3" width="460.6" height="66.2" fill="none" stroke="#f73434" stroke-width="2.5"/></svg>
</body></html>
